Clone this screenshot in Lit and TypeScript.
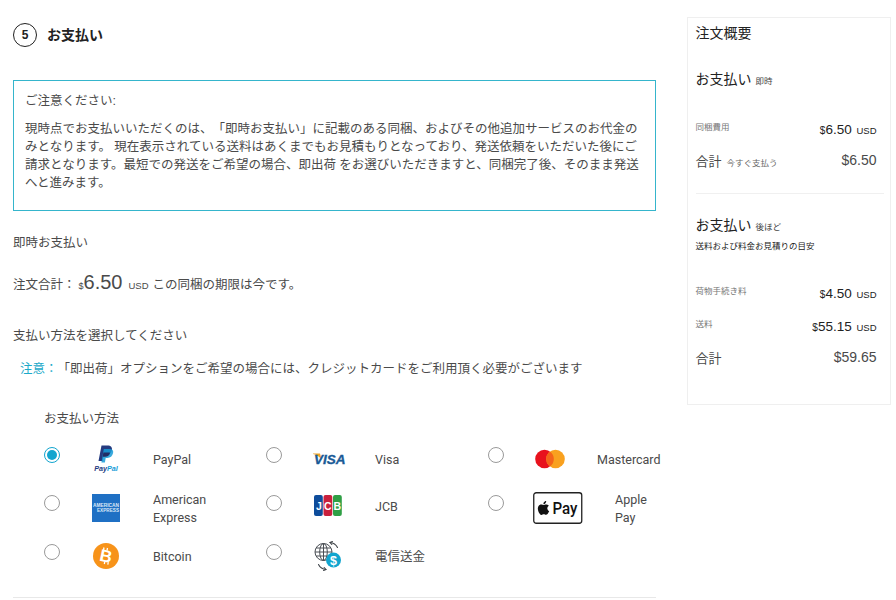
import { LitElement, html, css } from "lit";
import { customElement } from "lit/decorators.js";

const paypal = html`<svg width="30" height="30" viewBox="0 0 30 30">
  <path d="M10.5 1.5h6c3.4 0 5 1.8 4.4 4.6-.7 3.500-3 5.200-6.300 5.200h-2l-1 5.700H7.500z" fill="#253b80"/>
  <path d="M12.800 5h5.500c3 0 4.400 1.500 3.800 4.100-.7 3.200-2.800 4.900-5.600 4.900h-1.800l-.8 4.400h-3.500z" fill="#179bd7" opacity=".85"/>
  <path d="M12.400 8.500h5c.6 0 1.200.1 1.700.3-.6 2.500-2.400 3.900-5 3.900h-2.400z" fill="#222d65"/>
  <text x="15" y="26.500" text-anchor="middle" font-family="'Liberation Sans',sans-serif" font-weight="700" font-style="italic" font-size="7.200" fill="#253b80">Pay<tspan fill="#179bd7">Pal</tspan></text>
</svg>`;

const visa = html`<svg width="38" height="18" viewBox="0 0 38 18">
  <path d="M4 3.500h7l1.800 6.500C11 7 8 4.800 4 4z" fill="#f0a326"/>
  <text x="5" y="14" font-family="'Liberation Sans',sans-serif" font-weight="700" font-style="italic" font-size="13.500" fill="#1a5a96" stroke="#1a5a96" stroke-width=".35">VISA</text>
</svg>`;

const mastercard = html`<svg width="30" height="20" viewBox="0 0 30 20">
  <circle cx="9.500" cy="10" r="9.300" fill="#e8121d"/>
  <circle cx="20.500" cy="10" r="9.300" fill="#f9a11f"/>
  <path d="M15 2.500a9.300 9.300 0 0 1 0 15 9.300 9.300 0 0 1 0-15z" fill="#f4641a"/>
</svg>`;

const amex = html`<svg width="28" height="28" viewBox="0 0 28 28">
  <rect width="28" height="28" fill="#1f70c4"/>
  <g fill="#dbe9f7" font-family="'Liberation Sans',sans-serif" font-weight="700" font-size="4.500">
    <text x="1" y="12.500" textLength="26" lengthAdjust="spacingAndGlyphs">AMERICAN</text>
    <text x="5" y="18" textLength="22" lengthAdjust="spacingAndGlyphs">EXPRESS</text>
  </g>
</svg>`;

const jcb = html`<svg width="28" height="21" viewBox="0 0 28 21">
  <rect x="0" width="8.800" height="21" rx="2" fill="#0d4c9b"/>
  <rect x="9.500" width="8.800" height="21" rx="2" fill="#c8203d"/>
  <rect x="19" width="8.800" height="21" rx="2" fill="#2f9f45"/>
  <g fill="#fff" font-family="'Liberation Sans',sans-serif" font-weight="700" font-size="10.500" text-anchor="middle">
    <text x="5" y="14.500">J</text><text x="13.900" y="14.500">C</text><text x="23.400" y="14.500">B</text>
  </g>
</svg>`;

const applepay = html`<svg width="50" height="32" viewBox="0 0 50 32">
  <rect x=".75" y=".75" width="48" height="30.500" rx="2.500" fill="#fff" stroke="#222" stroke-width="1.300"/>
  <path d="M12.400 11.300c.5-.6.900-1.400.8-2.300-.8 0-1.600.5-2.100 1.100-.4.500-.8 1.300-.7 2.100.8.100 1.500-.4 2-.9zm.8 1.200c-1.100-.1-2.100.6-2.600.6s-1.400-.6-2.300-.6c-1.200 0-2.300.7-2.900 1.700-1.200 2.100-.3 5.300.9 7 .6.800 1.300 1.800 2.200 1.700.9 0 1.200-.6 2.300-.6s1.400.6 2.300.5c1 0 1.500-.8 2.100-1.700.7-1 .9-1.900 1-2-.1 0-1.900-.7-1.900-2.800 0-1.700 1.400-2.600 1.500-2.600-.8-1.200-2.100-1.300-2.600-1.300z" fill="#111"/>
  <text x="19.500" y="22" font-family="Roboto,sans-serif" font-weight="500" font-size="16" textLength="25" lengthAdjust="spacingAndGlyphs" fill="#111">Pay</text>
</svg>`;

const bitcoin = html`<svg width="26" height="26" viewBox="0 0 26 26">
  <circle cx="13" cy="13" r="13" fill="#f7931a"/>
  <text x="13" y="19" text-anchor="middle" transform="rotate(12 13 13)" font-family="'Liberation Sans',sans-serif" font-weight="700" font-size="17" fill="#fff">B</text>
  <path d="M11 4.500l-.5 2.500M14.500 5l-.5 2.500M11.800 18.500l-.5 2.500M15.300 19.200l-.5 2.500" stroke="#fff" stroke-width="1.300"/>
</svg>`;

const wire = html`<svg width="30" height="30" viewBox="0 0 30 30" fill="none">
  <g stroke="#4a4f55" stroke-width="1">
    <circle cx="10.500" cy="11" r="8.500"/>
    <ellipse cx="10.500" cy="11" rx="3.800" ry="8.500"/>
    <path d="M10.500 2.500v17M2 11h17M3 7h15M3 15h15"/>
  </g>
  <g stroke="#3f4449" stroke-width="1.100" stroke-linecap="round">
    <path d="M17 1.500c3.500.3 6 2 7.500 5"/>
    <path d="M17 1.500l2.400-1M17 1.500l1.800 2"/>
    <path d="M13 28.500c-3.500-.3-6-2-7.500-5"/>
    <path d="M13 28.500l-2.400 1M13 28.500l-1.800-2"/>
  </g>
  <circle cx="20.500" cy="19" r="7.500" fill="#12a5cf"/>
  <text x="20.500" y="23.500" text-anchor="middle" font-family="'Liberation Sans',sans-serif" font-weight="700" font-size="12.500" fill="#fff">$</text>
</svg>`;

type Method = { icon: unknown; label: string[]; checked?: boolean; shift?: boolean; up?: boolean };
const methods: Method[] = [
  { icon: paypal, label: ["PayPal"], checked: true },
  { icon: visa, label: ["Visa"] },
  { icon: mastercard, label: ["Mastercard"] },
  { icon: amex, label: ["American", "Express"] },
  { icon: jcb, label: ["JCB"], up: true },
  { icon: applepay, label: ["Apple", "Pay"], shift: true },
  { icon: bitcoin, label: ["Bitcoin"] },
  { icon: wire, label: ["電信送金"] },
];

@customElement("app-root")
export class AppRoot extends LitElement {
  static styles = css`
    :host {
      display: block;
      width: 896px;
      height: 600px;
      overflow: hidden;
      background: #fff;
      color: #4a4a4a;
      font-family: "Liberation Sans", "Noto Sans CJK JP", sans-serif;
      font-size: 12.5px;
      text-spacing-trim: space-all;
    }
    .page { display: flex; align-items: flex-start; padding: 17px 6px 0 13px; gap: 31px; }
    .main { width: 643px; flex: none; }
    .step { display: flex; align-items: center; gap: 10px; height: 36px; }
    .num {
      width: 24px; height: 24px; box-sizing: border-box; border: 1.500px solid #222; border-radius: 50%;
      display: flex; align-items: center; justify-content: center;
      font: 700 12px "Liberation Sans", sans-serif; color: #222;
    }
    .step-title { font-size: 14px; font-weight: 700; color: #222; margin-top: -2px; }
    .notice {
      margin-top: 27px; height: 131px; box-sizing: border-box; border: 1px solid #35b5cc;
      padding: 11px 11px 0; line-height: 18px; white-space: nowrap;
    }
    .notice p { margin: 10px 0 0; }
    .line { white-space: nowrap; line-height: 18px; }
    .l1 { margin-top: 23px; }
    .total { margin-top: 18px; height: 24px; display: flex; align-items: baseline; line-height: 24px; white-space: nowrap; }
    .cur { font-size: 9px; margin-left: 3px; }
    .big { font-size: 20px; }
    .usd { font-size: 9.500px; margin: 0 4px 0 6px; }
    .l3 { margin-top: 33px; }
    .warn { margin-top: 15px; padding-left: 7px; }
    .warn b { font-weight: 400; color: #1ba9c9; }
    .l5 { margin-top: 32px; padding-left: 31px; }
    .grid {
      display: grid; grid-template-columns: 222px 222px 222px; grid-auto-rows: 48.500px;
      margin: 7px 0 0 31px; width: 666px;
    }
    .opt { display: flex; align-items: center; height: 48.500px; }
    .radio {
      width: 16px; height: 16px; box-sizing: border-box; border: 1px solid #9a9a9a; border-radius: 50%;
      margin: -4.500px 0 4.500px; flex: none; display: flex; align-items: center; justify-content: center;
    }
    .radio.on { border: 1.500px solid #12a5cf; }
    .radio.on::after { content: ""; width: 10px; height: 10px; border-radius: 50%; background: #12a5cf; }
    .icon { width: 60px; margin-left: 16px; display: flex; justify-content: center; flex: none; }
    .icon.shift { transform: translateX(8px); }
    .icon.up { margin-bottom: 4px; }
    .lab { margin: 2px 0 0 17px; font: 12.500px/18px Roboto, "Noto Sans CJK JP", sans-serif; white-space: nowrap; }
    .lab.shift { margin-left: 35px; }
    .lab.up { margin-top: 0; margin-bottom: 1px; }
    .rule { height: 1px; background: #e8e8e8; margin-top: 16.500px; }
    .side {
      width: 204px; height: 388px; box-sizing: border-box; flex: none; border: 1px solid #efefef;
      padding: 0 6.500px 0 7.500px; color: #4a4a4a;
    }
    .stitle { font-size: 14px; color: #222; line-height: 20px; margin-top: 5px; }
    .sub { font-size: 14px; color: #222; line-height: 20px; white-space: nowrap; }
    .sub small { font-size: 8.500px; color: #444; margin-left: 4px; }
    .row { display: flex; justify-content: space-between; align-items: center; padding-right: 7px; white-space: nowrap; height: 20px; }
    .k { font-size: 8.500px; color: #777; margin-bottom: 6px; }
    .v { font-size: 13.500px; color: #222; font-family: "Liberation Sans", sans-serif; }
    .v i { font-style: normal; font-size: 10px; }
    .v u { text-decoration: none; font-size: 9.500px; margin-left: 1px; }
    .sum { font-size: 13px; color: #4a4a4a; }
    .sum small { font-size: 8.500px; color: #666; margin-left: 5px; }
    .amt { font-size: 14px; color: #4a4a4a; font-family: "Liberation Sans", sans-serif; }
    .divider { height: 1px; background: #f0f0f0; }
    .est { font-size: 8.500px; color: #222; line-height: 12px; margin-top: 3px; white-space: nowrap; }
    .m26 { margin-top: 26px; } .m28 { margin-top: 28px; } .m11 { margin-top: 11px; }
    .m23 { margin-top: 23px; } .m21 { margin-top: 21px; } .m31 { margin-top: 31px; }
    .m13 { margin-top: 13px; }
  `;

  render() {
    return html`<div class="page">
      <div class="main">
        <div class="step"><span class="num">5</span><span class="step-title">お支払い</span></div>
        <div class="notice">
          ご注意ください:
          <p>現時点でお支払いいただくのは、「即時お支払い」に記載のある同梱、およびその他追加サービスのお代金の<br>みとなります。 現在表示されている送料はあくまでもお見積もりとなっており、発送依頼をいただいた後にご<br>請求となります。最短での発送をご希望の場合、即出荷 をお選びいただきますと、同梱完了後、そのまま発送<br>へと進みます。</p>
        </div>
        <div class="line l1">即時お支払い</div>
        <div class="total">注文合計：<span class="cur">$</span><span class="big">6.50</span><span class="usd">USD</span>この同梱の期限は今です。</div>
        <div class="line l3">支払い方法を選択してください</div>
        <div class="line warn"><b>注意：</b>「即出荷」オプションをご希望の場合には、クレジットカードをご利用頂く必要がございます</div>
        <div class="line l5">お支払い方法</div>
        <div class="grid">
          ${methods.map(
            (m) => html`<div class="opt">
              <span class="radio ${m.checked ? "on" : ""}"></span>
              <span class="icon ${m.shift ? "shift" : ""} ${m.up ? "up" : ""}">${m.icon}</span>
              <span class="lab ${m.shift ? "shift" : ""} ${m.up ? "up" : ""}">${m.label.map((t, i) => html`${i ? html`<br>` : ""}${t}`)}</span>
            </div>`
          )}
        </div>
        <div class="rule"></div>
      </div>
      <aside class="side">
        <div class="stitle">注文概要</div>
        <div class="sub m26">お支払い<small>即時</small></div>
        <div class="row m28"><span class="k">同梱費用</span><span class="v"><i>$</i>6.50 <u>USD</u></span></div>
        <div class="row m11"><span class="sum">合計<small>今すぐ支払う</small></span><span class="amt">$6.50</span></div>
        <div class="divider m23"></div>
        <div class="sub m21">お支払い<small>後ほど</small></div>
        <div class="est">送料および料金お見積りの目安</div>
        <div class="row m31"><span class="k">荷物手続き料</span><span class="v"><i>$</i>4.50 <u>USD</u></span></div>
        <div class="row m13"><span class="k">送料</span><span class="v"><i>$</i>55.15 <u>USD</u></span></div>
        <div class="row m11"><span class="sum">合計</span><span class="amt">$59.65</span></div>
      </aside>
    </div>`;
  }
}
